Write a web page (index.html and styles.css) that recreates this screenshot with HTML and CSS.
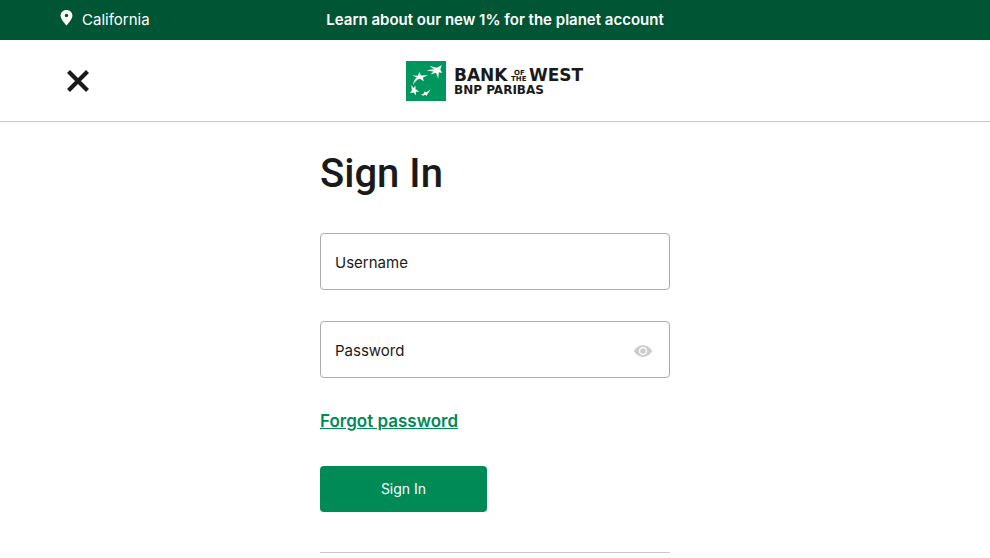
FILE: index.html
```html
<!DOCTYPE html>
<html lang="en">
<head>
<meta charset="utf-8">
<meta name="viewport" content="width=device-width, initial-scale=1">
<title>Sign In</title>
<link rel="stylesheet" href="styles.css">
</head>
<body>
<div class="banner">
  <a class="location" href="#">
    <svg width="13" height="16" viewBox="0 0 13 16" aria-hidden="true"><path fill="currentColor" fill-rule="evenodd" d="M6.500 0C2.900 0 .6 2.500.6 5.800C.6 9.500 6.500 15.500 6.500 15.500S12.400 9.500 12.400 5.800C12.400 2.500 10.100 0 6.500 0ZM6.500 3.700a1.800 1.800 0 1 1 0 3.600a1.800 1.800 0 1 1 0-3.600Z"/></svg>
    <span>California</span>
  </a>
  <a class="promo" href="#">Learn about our new 1% for the planet account</a>
</div>
<header class="header">
  <button class="close" type="button" aria-label="Close">
    <svg width="22" height="22" viewBox="0 0 22 22" aria-hidden="true"><path d="M1.500 1.500L20.500 20.500M20.500 1.500L1.500 20.500" fill="none" stroke="currentColor" stroke-width="4.200"/></svg>
  </button>
  <a class="logo" href="#" aria-label="Bank of the West BNP Paribas">
    <svg width="178" height="40" viewBox="0 0 178 40">
      <rect width="40" height="40" fill="#00965e"/>
      <g fill="#fff">
        <path d="M20.500 9.500Q25 8 28.300 8.500L23.500 5L30.500 6.800L35.800 4.200L34.300 8.600L36 12L32.800 11.200L32.200 18Q31.400 13.500 29.800 11.700L24.500 13.500L27.500 10.600Q24.500 9.800 20.500 9.500Z"/>
        <path d="M6.300 14.500L11.800 14.700L13.500 11L14.800 14.500L22 14.300L16.900 16.500L17.800 20.200L13.900 17.800Q9.300 19 7.200 24Q7.600 19 11 16.600Z"/>
        <path d="M5.300 24L7.700 27L9.500 24.500L9.500 28.300L13.300 30.500L9.800 30.800L10 34.200L7.500 31.500L4 32L5.900 29.200Z"/>
        <path d="M14.500 34L18.300 32.300L17.800 30.500L20.300 31.300Q22.500 30.500 24.500 28.300Q23.500 31 21.700 32.600L20.800 34.800L19 33.800L16 35.300L17.200 33.700Z"/>
      </g>
      <g class="logo-text">
        <text class="logo-name" x="48" y="20">BANK</text>
        <text class="logo-small" x="108" y="14">OF</text>
        <text class="logo-small" x="105" y="20">THE</text>
        <text class="logo-name" x="123" y="20">WEST</text>
        <text class="logo-group" x="48" y="33">BNP PARIBAS</text>
      </g>
    </svg>
  </a>
</header>
<main class="main">
  <h1>Sign In</h1>
  <form class="form">
    <div class="field">
      <label for="username">Username</label>
      <input id="username" type="text" autocomplete="username">
    </div>
    <div class="field">
      <label for="password">Password</label>
      <input id="password" type="password" autocomplete="current-password">
      <button class="reveal" type="button" aria-label="Show password">
        <svg width="20" height="14" viewBox="0 0 20 14" aria-hidden="true"><path fill="currentColor" d="M.7 7C5.500-.7 14.500-.7 19.300 7C14.500 14.700 5.500 14.700.7 7Z"/><circle cx="10" cy="7" r="3.400" fill="none" stroke="#fff" stroke-width="1.200"/></svg>
      </button>
    </div>
    <a class="forgot" href="#">Forgot password</a>
    <button class="submit" type="submit">Sign In</button>
  </form>
  <hr>
</main>
</body>
</html>
```
FILE: styles.css
```css
* { box-sizing: border-box; }
body {
  margin: 0;
  background: #fff;
  color: #1a1a1a;
  font: 15px/24px Inter, sans-serif;
}
button { font: inherit; border: 0; padding: 0; background: none; color: inherit; cursor: pointer; }
svg { display: block; }
a { color: inherit; text-decoration: none; }

.banner, .header {
  display: grid;
  grid-template-columns: 1fr auto 1fr;
  align-items: center;
  padding: 0 60px;
}
.banner { height: 40px; background: #005534; color: #fff; }
.location { display: flex; align-items: center; gap: 9px; }
.location svg { margin-bottom: 4px; }
.promo { font-weight: 600; }

.header { height: 82px; border-bottom: 1px solid #c8c8c8; }
.close { justify-self: start; padding: 7px; }
.logo-text { fill: #1a1a1a; font-family: "DejaVu Sans", sans-serif; font-weight: 700; }
.logo-name { font-size: 17px; }
.logo-group { font-size: 12px; }
.logo-small { font-size: 7px; }

.main { width: 100%; max-width: 390px; margin: 0 auto; padding: 28px 20px 0; }
h1 { margin: 0 0 35px; font: 500 40px/48px Roboto, sans-serif; }
.form { display: flex; flex-direction: column; align-items: flex-start; }
.field { position: relative; width: 100%; margin-bottom: 31px; }
.field label { position: absolute; left: 15px; top: 18px; pointer-events: none; }
.field input {
  display: block;
  width: 100%;
  height: 57px;
  padding: 2px 48px 0 15px;
  border: 1px solid #adadad;
  border-radius: 4px;
  background: #fff;
  font: inherit;
}
.reveal { position: absolute; right: 17px; top: 23px; color: #ccc; }
.forgot {
  margin-bottom: 33px;
  color: #008a56;
  font-size: 17px;
  font-weight: 600;
  text-decoration: underline;
}
.submit {
  width: 167px;
  height: 46px;
  border-radius: 4px;
  background: #008a56;
  color: #fff;
  font-size: 14px;
}
hr { margin: 40px 0 0; border: 0; border-top: 1px solid #c8c8c8; }
```
